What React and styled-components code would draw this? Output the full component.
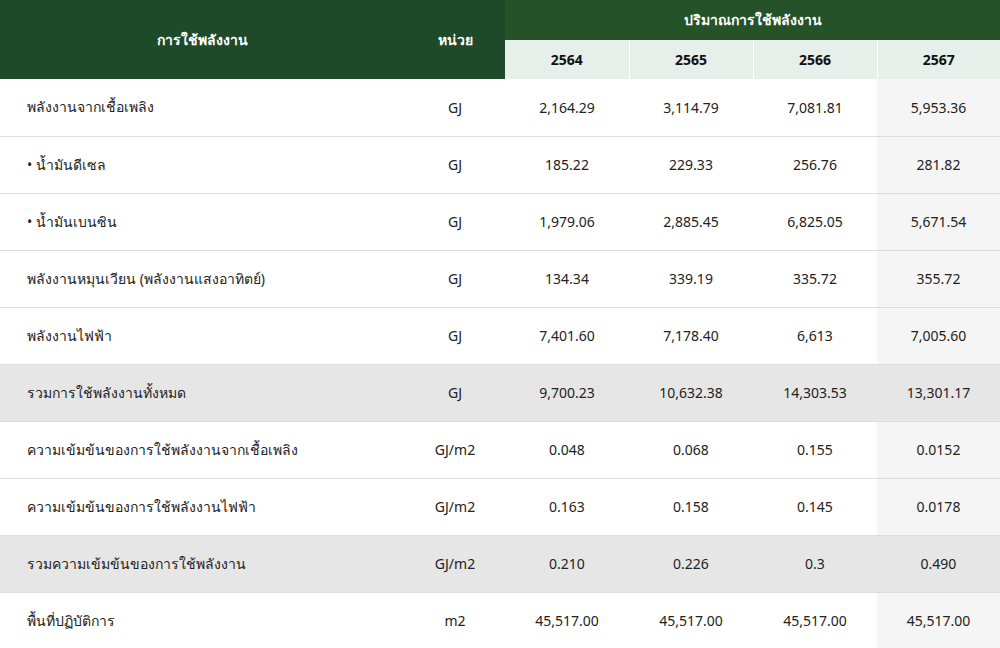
import React from "react";
import styled, { createGlobalStyle } from "styled-components";

const Global = createGlobalStyle`
  body { margin: 0; background: #fff; font-family: "Noto Sans", "Open Sans", sans-serif; color: #222; }
`;

const Table = styled.table`
  width: 1000px;
  border-collapse: collapse;
  table-layout: fixed;
  font-size: 14px;
`;

const Col = styled.col`
  width: ${(p) => p.$w}px;
`;

const HeadCell = styled.th`
  background: ${(p) => (p.$dark ? "#1f4a2a" : "#255228")};
  color: #fff;
  font-weight: 600;
  font-size: 14px;
  height: 40px;
  padding: 0;
  text-align: center;
`;

const YearCell = styled.th`
  background: #e6efe9;
  color: #111;
  font-weight: 700;
  font-size: 14px;
  height: 39px;
  padding: 0;
  border-left: ${(p) => (p.$first ? "none" : "1px solid #fff")};
`;

const Row = styled.tr`
  height: 57px;
  background: ${(p) => (p.$total ? "#e6e6e6" : "#fff")};
  border-bottom: 1px solid #dcdcdc;
`;

const Label = styled.td`
  padding: 0 0 0 27px;
  text-align: left;
`;

const Cell = styled.td`
  text-align: center;
  padding: 0;
  background: ${(p) => (p.$last && !p.$total ? "#f5f5f5" : "transparent")};
`;

const widths = [405, 100, 124, 124, 124, 123];

const rows = [
  ["พลังงานจากเชื้อเพลิง", "GJ", ["2,164.29", "3,114.79", "7,081.81", "5,953.36"]],
  ["• น้ำมันดีเซล", "GJ", ["185.22", "229.33", "256.76", "281.82"]],
  ["• น้ำมันเบนซิน", "GJ", ["1,979.06", "2,885.45", "6,825.05", "5,671.54"]],
  ["พลังงานหมุนเวียน (พลังงานแสงอาทิตย์)", "GJ", ["134.34", "339.19", "335.72", "355.72"]],
  ["พลังงานไฟฟ้า", "GJ", ["7,401.60", "7,178.40", "6,613", "7,005.60"]],
  ["รวมการใช้พลังงานทั้งหมด", "GJ", ["9,700.23", "10,632.38", "14,303.53", "13,301.17"], true],
  ["ความเข้มข้นของการใช้พลังงานจากเชื้อเพลิง", "GJ/m2", ["0.048", "0.068", "0.155", "0.0152"]],
  ["ความเข้มข้นของการใช้พลังงานไฟฟ้า", "GJ/m2", ["0.163", "0.158", "0.145", "0.0178"]],
  ["รวมความเข้มข้นของการใช้พลังงาน", "GJ/m2", ["0.210", "0.226", "0.3", "0.490"], true],
  ["พื้นที่ปฏิบัติการ", "m2", ["45,517.00", "45,517.00", "45,517.00", "45,517.00"]],
];

export default function App() {
  return (
    <>
      <Global />
      <Table>
        <colgroup>
          {widths.map((w, i) => (
            <Col key={i} $w={w} />
          ))}
        </colgroup>
        <thead>
          <tr>
            <HeadCell $dark rowSpan={2}>การใช้พลังงาน</HeadCell>
            <HeadCell $dark rowSpan={2}>หน่วย</HeadCell>
            <HeadCell colSpan={4}>ปริมาณการใช้พลังงาน</HeadCell>
          </tr>
          <tr>
            {["2564", "2565", "2566", "2567"].map((y, i) => (
              <YearCell key={y} $first={i === 0}>{y}</YearCell>
            ))}
          </tr>
        </thead>
        <tbody>
          {rows.map(([label, unit, vals, total]) => (
            <Row key={label} $total={total}>
              <Label>{label}</Label>
              <Cell>{unit}</Cell>
              {vals.map((v, i) => (
                <Cell key={i} $last={i === 3} $total={total}>{v}</Cell>
              ))}
            </Row>
          ))}
        </tbody>
      </Table>
    </>
  );
}
